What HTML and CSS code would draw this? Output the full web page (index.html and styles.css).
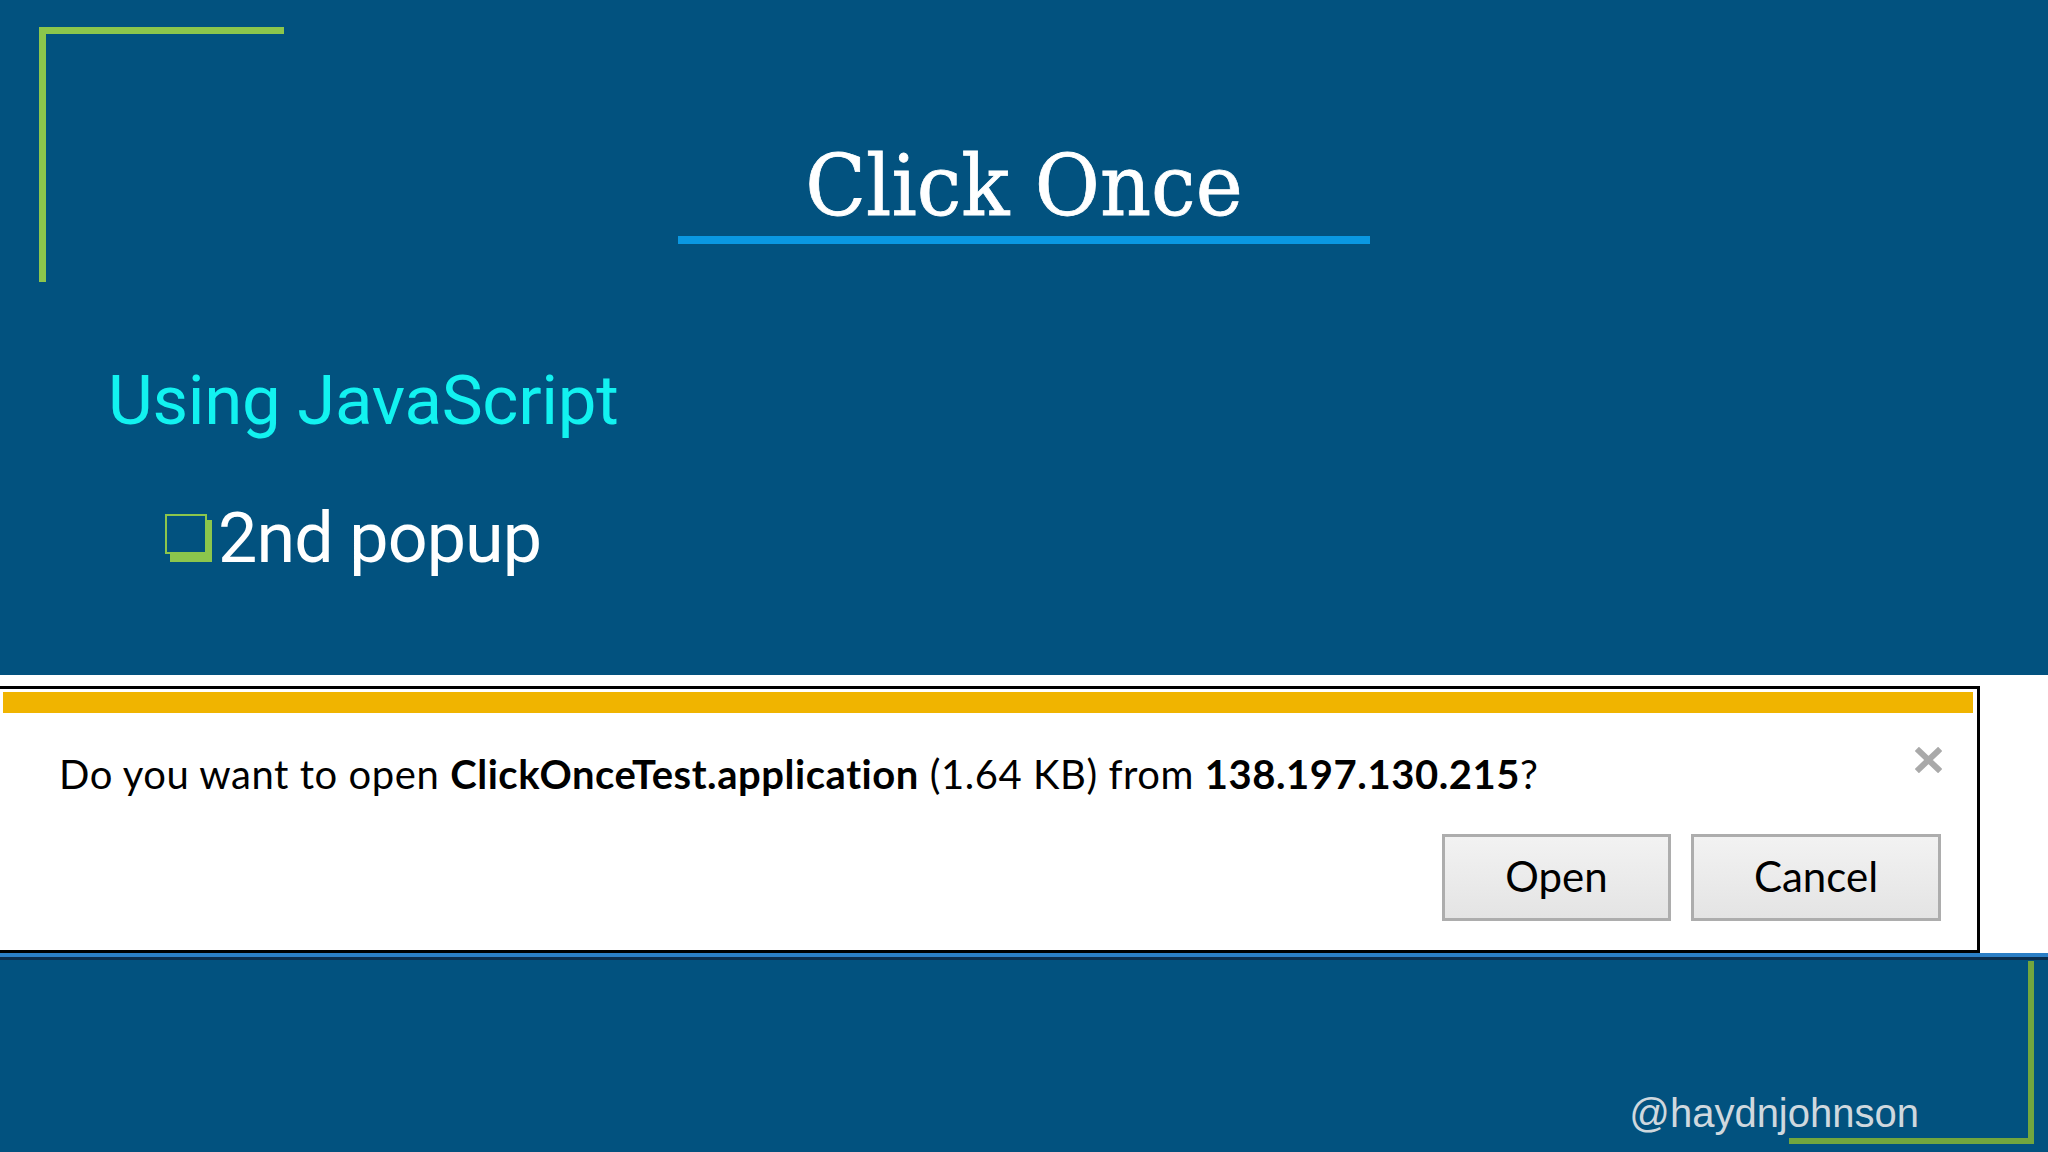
FILE: index.html
```html
<!DOCTYPE html>
<html lang="en">
<head>
<meta charset="utf-8">
<title>Click Once</title>
<link rel="stylesheet" href="styles.css">
</head>
<body>
<div class="slide">
  <section class="top">
    <div class="corner-tl"></div>
    <div class="title-wrap"><h1 class="title">Click Once</h1></div>
    <div class="title-rule"></div>
    <p class="subtitle">Using JavaScript</p>
    <div class="bullet-row">
      <span class="bullet"><span class="bullet-back"></span><span class="bullet-front"></span></span>
      <span class="bullet-text">2nd popup</span>
    </div>
  </section>
  <section class="shot">
    <div class="dialog">
      <div class="notice-bar"></div>
      <div class="msg-row">
        <p class="msg">Do you want to open <b>ClickOnceTest.application</b> (1.64 KB) from <b>138.197.130.215</b>?</p>
        <svg class="close" width="27" height="26" viewBox="0 0 27 26" aria-label="Close">
          <path d="M4 4 L23 22 M23 4 L4 22" stroke="#a9a9a9" stroke-width="6" stroke-linecap="square" fill="none"/>
        </svg>
      </div>
      <div class="btn-row">
        <button class="btn btn-open">Open</button>
        <button class="btn btn-cancel">Cancel</button>
      </div>
    </div>
  </section>
  <div class="shot-edge"></div>
  <section class="bottom">
    <span class="handle">@haydnjohnson</span>
    <div class="corner-br"></div>
  </section>
</div>
</body>
</html>
```

FILE: styles.css
```css
* { box-sizing: border-box; }
html, body { margin: 0; padding: 0; }
body {
  width: 2048px;
  height: 1152px;
  overflow: hidden;
  background: #02527f;
  font-family: Roboto, "Liberation Sans", sans-serif;
}
.slide {
  display: flex;
  flex-direction: column;
  width: 2048px;
  height: 1152px;
}
.top {
  position: relative;
  height: 675px;
  display: flex;
  flex-direction: column;
  padding-top: 143px;
}
.corner-tl {
  position: absolute;
  left: 39px;
  top: 27px;
  width: 245px;
  height: 255px;
  border-left: 7px solid #8cc64c;
  border-top: 7px solid #8cc64c;
}
.title-wrap {
  display: flex;
  justify-content: center;
}
.title {
  margin: 0;
  font-family: "DejaVu Serif", "Liberation Serif", serif;
  font-weight: normal;
  font-size: 85px;
  line-height: 85px;
  color: #ffffff;
  transform: scaleX(0.935);
  -webkit-text-stroke: 0.8px #ffffff;
}
.title-rule {
  align-self: center;
  width: 692px;
  height: 8px;
  margin-top: 8px;
  background: #0a98e2;
}
.subtitle {
  margin: 122px 0 0 108px;
  font-size: 69px;
  line-height: 69px;
  letter-spacing: -0.3px;
  color: #12f2f0;
}
.bullet-row {
  display: flex;
  align-items: flex-start;
  margin-top: 68px;
  padding-left: 165px;
}
.bullet {
  position: relative;
  width: 47px;
  height: 48px;
  margin-top: 11px;
}
.bullet-back {
  position: absolute;
  left: 5px;
  top: 6px;
  width: 42px;
  height: 42px;
  background: #8cc64c;
}
.bullet-front {
  position: absolute;
  left: 0;
  top: 0;
  width: 42px;
  height: 40px;
  background: #02527f;
  border: 2px solid #8cc64c;
}
.bullet-text {
  margin-left: 6px;
  font-size: 70px;
  line-height: 70px;
  letter-spacing: -0.9px;
  color: #ffffff;
}
.shot {
  height: 278px;
  background: #ffffff;
  padding-top: 11px;
}
.dialog {
  margin-left: -3px;
  width: 1983px;
  height: 267px;
  border: 3px solid #000000;
  padding: 3px 4px 0 3px;
  display: flex;
  flex-direction: column;
  font-family: Lato, "Open Sans", sans-serif;
}
.notice-bar {
  height: 21px;
  background: #f0b400;
}
.msg-row {
  display: flex;
  justify-content: space-between;
  align-items: flex-start;
  height: 26px;
  margin-top: 34px;
  padding-left: 56px;
  padding-right: 31px;
}
.msg {
  margin: 7px 0 0 0;
  font-size: 40px;
  line-height: 40px;
  letter-spacing: 0.55px;
  color: #000000;
  white-space: nowrap;
}
.msg b { font-weight: bold; }
.close { display: block; flex: none; }
.btn-row {
  display: flex;
  justify-content: flex-end;
  gap: 20px;
  margin-top: 61px;
  padding-right: 32px;
}
.btn {
  height: 87px;
  padding: 0 0 3px 0;
  border: 3px solid #adadad;
  background: linear-gradient(#f2f2f2, #e4e4e4);
  font-family: Lato, "Open Sans", sans-serif;
  font-size: 42px;
  line-height: 42px;
  color: #000000;
  text-align: center;
}
.btn-open { width: 229px; }
.btn-cancel { width: 250px; }
.shot-edge {
  height: 7px;
  border-top: 4px solid #2b7fc6;
  background: #0a2d4d;
}
.bottom {
  position: relative;
  flex: 1;
  display: flex;
  justify-content: flex-end;
  align-items: flex-start;
  padding-top: 133px;
  padding-right: 129px;
}
.handle {
  font-family: "Liberation Sans", Arial, sans-serif;
  font-size: 40px;
  line-height: 40px;
  color: #cfd8de;
}
.corner-br {
  position: absolute;
  right: 14px;
  top: 1px;
  width: 245px;
  height: 183px;
  border-right: 6px solid #72a63e;
  border-bottom: 6px solid #72a63e;
}
```
